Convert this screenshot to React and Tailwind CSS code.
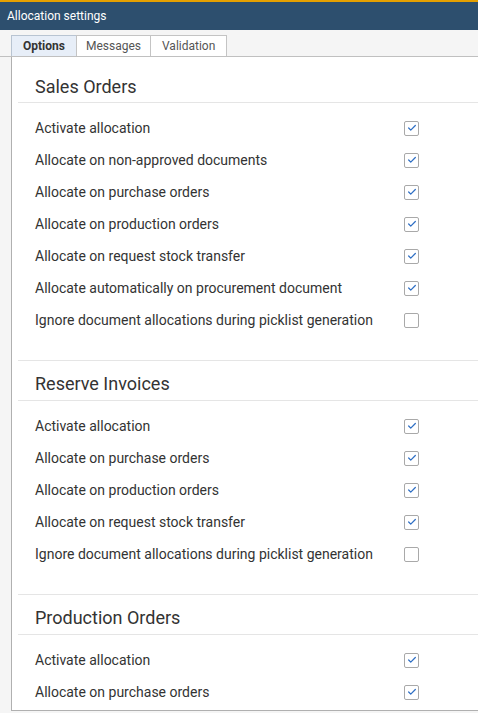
import { Check } from 'lucide-react'

const sections = [
  {
    title: 'Sales Orders',
    rows: [
      ['Activate allocation', true],
      ['Allocate on non-approved documents', true],
      ['Allocate on purchase orders', true],
      ['Allocate on production orders', true],
      ['Allocate on request stock transfer', true],
      ['Allocate automatically on procurement document', true],
      ['Ignore document allocations during picklist generation', false],
    ],
  },
  {
    title: 'Reserve Invoices',
    rows: [
      ['Activate allocation', true],
      ['Allocate on purchase orders', true],
      ['Allocate on production orders', true],
      ['Allocate on request stock transfer', true],
      ['Ignore document allocations during picklist generation', false],
    ],
  },
  {
    title: 'Production Orders',
    rows: [
      ['Activate allocation', true],
      ['Allocate on purchase orders', true],
    ],
  },
]

// tab label + horizontal padding
const tabs = [
  ['Options', 'px-[11px]'],
  ['Messages', 'px-[9px]'],
  ['Validation', 'px-[11px]'],
]

function Checkbox({ checked }) {
  return (
    <div className="w-[15px] h-[15px] rounded-[2px] border border-[#a9a9a9] bg-white flex items-center justify-center">
      {checked && <Check size={10} strokeWidth={3} className="text-[#2f6fc4]" />}
    </div>
  )
}

function Section({ section, first }) {
  return (
    <div className={first ? '' : 'border-t border-[#e5e5e5] mt-[24px]'}>
      <div
        className={
          'pl-[17px] flex items-end border-b border-[#e5e5e5] text-[18px] text-[#333] ' +
          (first ? 'h-[46px] pb-[2px]' : 'h-[40px] pb-[3px]')
        }
      >
        {section.title}
      </div>
      <div className="pt-[9px]">
        {section.rows.map(([label, checked]) => (
          <div key={label} className="h-[32px] flex items-center justify-between pl-[17px] pr-[59px]">
            <span className="text-[14px] text-[#333]">{label}</span>
            <Checkbox checked={checked} />
          </div>
        ))}
      </div>
    </div>
  )
}

export default function App() {
  return (
    <div className="w-[478px] h-[713px] overflow-hidden bg-[#f5f5f5] flex flex-col" style={{ fontFamily: 'Roboto, sans-serif' }}>
      <div className="h-[30px] bg-[#2d4f6e] border-t-2 border-[#e5a000] flex items-center pl-[7px] text-[12px] text-white">
        Allocation settings
      </div>
      <div className="h-[27px] flex items-end pl-[11px] border-b border-[#c0c0c0]">
        {tabs.map(([t, pad], i) => (
          <div
            key={t}
            className={
              'h-[21px] flex items-center text-[12px] border border-b-0 ' + pad + ' ' +
              (i === 0
                ? 'bg-[#e7eef8] border-[#b8c4d2] font-bold text-[#333]'
                : 'bg-white border-[#c4c4c4] -ml-px text-[#555]')
            }
          >
            {t}
          </div>
        ))}
      </div>
      <div className="flex-1 ml-[11px] mb-[2px] bg-white border-l border-b border-[#b0b0b0] pl-[6px]">
        {sections.map((s, i) => (
          <Section key={s.title} section={s} first={i === 0} />
        ))}
      </div>
    </div>
  )
}
